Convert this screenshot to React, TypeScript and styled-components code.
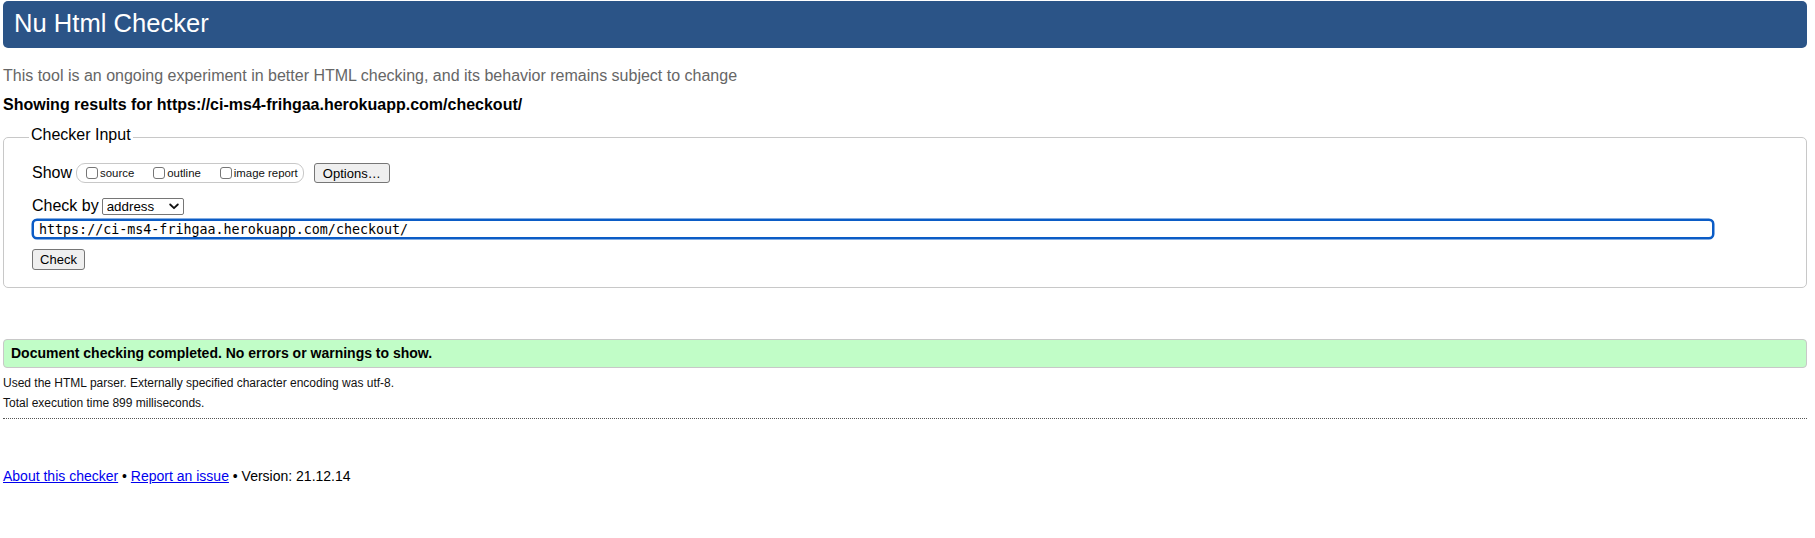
import React from "react";
import styled, { createGlobalStyle } from "styled-components";

const GlobalStyle = createGlobalStyle`
  html, body {
    margin: 0;
    padding: 0;
    background: #ffffff;
  }
  body {
    font-family: "Liberation Sans", Arial, Helvetica, sans-serif;
    color: #000;
  }
`;

const Page = styled.div`
  padding: 1px 8px 0 3px;
  font-family: "Liberation Sans", Arial, Helvetica, sans-serif;
`;

const Title = styled.h1`
  margin: 0;
  height: 47px;
  box-sizing: border-box;
  padding: 0 11px 3px;
  background: #2b5487;
  color: #ffffff;
  border-radius: 5px;
  font-size: 25.6px;
  font-weight: normal;
  line-height: 44px;
`;

const Intro = styled.p`
  margin: 18px 0 0;
  font-size: 16px;
  line-height: 20px;
  color: #666666;
`;

const ResultsFor = styled.p`
  margin: 9px 0 0;
  font-size: 16px;
  line-height: 20px;
  font-weight: bold;
  color: #000;
`;

const Fieldset = styled.fieldset`
  margin: 10px 0 0;
  padding: 12px 28px 17px 28px;
  border: 1px solid #c8c8c8;
  border-radius: 5px;
  min-width: 0;
  display: flex;
  flex-direction: column;
  align-items: flex-start;
`;

const Legend = styled.legend`
  margin-left: -3px;
  padding: 0 2px 5px;
  font-size: 16px;
  line-height: 20px;
`;

const Row = styled.div<{ $height: number; $top: number }>`
  display: flex;
  align-items: center;
  height: ${(p) => p.$height}px;
  margin-top: ${(p) => p.$top}px;
`;

const RowLabel = styled.span<{ $gap: number }>`
  font-size: 16px;
  line-height: 18px;
  margin-right: ${(p) => p.$gap}px;
`;

const Pill = styled.div`
  display: flex;
  align-items: center;
  height: 20px;
  box-sizing: border-box;
  border: 1px solid #c8c8c8;
  border-radius: 9px;
  padding: 0 5px 0 9px;
`;

const CheckLabel = styled.label<{ $first?: boolean }>`
  display: flex;
  align-items: center;
  margin-left: ${(p) => (p.$first ? 0 : 19)}px;
  font-size: 11.4px;
  line-height: 14px;
  color: #111;
`;

const Box = styled.input`
  appearance: none;
  width: 12px;
  height: 12px;
  margin: 0 2px 0 0;
  border: 1px solid #767676;
  border-radius: 3px;
  background: #fff;
  box-sizing: border-box;
`;

const Button = styled.button<{ $w: number; $h: number }>`
  width: ${(p) => p.$w}px;
  height: ${(p) => p.$h}px;
  box-sizing: border-box;
  padding: 0;
  background: #efefef;
  border: 1px solid #767676;
  border-radius: 3px;
  font-family: "Liberation Sans", Arial, Helvetica, sans-serif;
  font-size: 13px;
  color: #000;
`;

const OptionsButton = styled(Button)`
  margin-left: 10px;
`;

const SelectWrap = styled.div`
  display: flex;
  align-items: center;
  width: 82px;
  height: 17px;
  box-sizing: border-box;
  border: 1px solid #767676;
  border-radius: 2px;
  background: #fff;
  padding: 0 4px 0 4px;
`;

const Select = styled.select`
  appearance: none;
  flex: 1;
  min-width: 0;
  border: none;
  background: transparent;
  padding: 0;
  margin: 0;
  font-family: "Liberation Sans", Arial, Helvetica, sans-serif;
  font-size: 13.33px;
  line-height: 15px;
  color: #000;
  outline: none;
`;

const Chevron = styled.svg`
  flex: none;
  width: 10px;
  height: 7px;
`;

const UrlInput = styled.input`
  margin-top: 4px;
  width: calc(100% - 64px);
  height: 20px;
  box-sizing: border-box;
  border: 2px solid #0b5cc6;
  box-shadow: 0 0 0 0.5px #0b5cc6;
  border-radius: 5px;
  padding: 0 5px;
  font-family: "DejaVu Sans Mono", "Liberation Mono", monospace;
  font-size: 13.33px;
  color: #000;
  outline: none;
`;

const CheckButton = styled(Button)`
  margin-top: 10px;
`;

const Success = styled.div`
  margin-top: 51px;
  height: 29px;
  box-sizing: border-box;
  border: 1px solid #c8c8c8;
  border-radius: 4px;
  background: #c1fdc7;
  padding: 0 7px;
  font-size: 14px;
  font-weight: bold;
  line-height: 27px;
  color: #000;
`;

const Details = styled.div`
  margin-top: 6px;
  padding-bottom: 5px;
  border-bottom: 1px dotted #555;
`;

const DetailLine = styled.p`
  margin: 0;
  font-size: 12px;
  line-height: 19.5px;
  color: #111;
`;

const Footer = styled.p`
  margin: 47px 0 0;
  font-size: 14px;
  line-height: 20px;
  color: #000;
`;

const FooterLink = styled.a`
  color: #0000ee;
  text-decoration: underline;
`;

export default function App() {
  return (
    <>
      <GlobalStyle />
      <Page>
        <Title>Nu Html Checker</Title>
        <Intro>
          This tool is an ongoing experiment in better HTML checking, and its
          behavior remains subject to change
        </Intro>
        <ResultsFor>
          Showing results for https://ci-ms4-frihgaa.herokuapp.com/checkout/
        </ResultsFor>
        <Fieldset>
          <Legend>Checker Input</Legend>
          <Row $height={22} $top={0}>
            <RowLabel $gap={4}>Show</RowLabel>
            <Pill>
              <CheckLabel $first>
                <Box type="checkbox" />
                source
              </CheckLabel>
              <CheckLabel>
                <Box type="checkbox" />
                outline
              </CheckLabel>
              <CheckLabel>
                <Box type="checkbox" />
                image report
              </CheckLabel>
            </Pill>
            <OptionsButton type="button" $w={76} $h={20}>
              Options…
            </OptionsButton>
          </Row>
          <Row $height={18} $top={13}>
            <RowLabel $gap={3}>Check by</RowLabel>
            <SelectWrap>
              <Select defaultValue="address">
                <option value="address">address</option>
                <option value="file">file upload</option>
                <option value="text">text input</option>
              </Select>
              <Chevron viewBox="0 0 10 7">
                <polyline
                  points="1.2,1.5 5,5.2 8.8,1.5"
                  fill="none"
                  stroke="#111"
                  strokeWidth="1.8"
                  strokeLinecap="round"
                  strokeLinejoin="round"
                />
              </Chevron>
            </SelectWrap>
          </Row>
          <UrlInput
            type="url"
            defaultValue="https://ci-ms4-frihgaa.herokuapp.com/checkout/"
          />
          <CheckButton type="button" $w={53} $h={21}>
            Check
          </CheckButton>
        </Fieldset>
        <Success>
          Document checking completed. No errors or warnings to show.
        </Success>
        <Details>
          <DetailLine>
            Used the HTML parser. Externally specified character encoding was
            utf-8.
          </DetailLine>
          <DetailLine>Total execution time 899 milliseconds.</DetailLine>
        </Details>
        <Footer>
          <FooterLink href="#about">About this checker</FooterLink> •{" "}
          <FooterLink href="#report">Report an issue</FooterLink> • Version:
          21.12.14
        </Footer>
      </Page>
    </>
  );
}
